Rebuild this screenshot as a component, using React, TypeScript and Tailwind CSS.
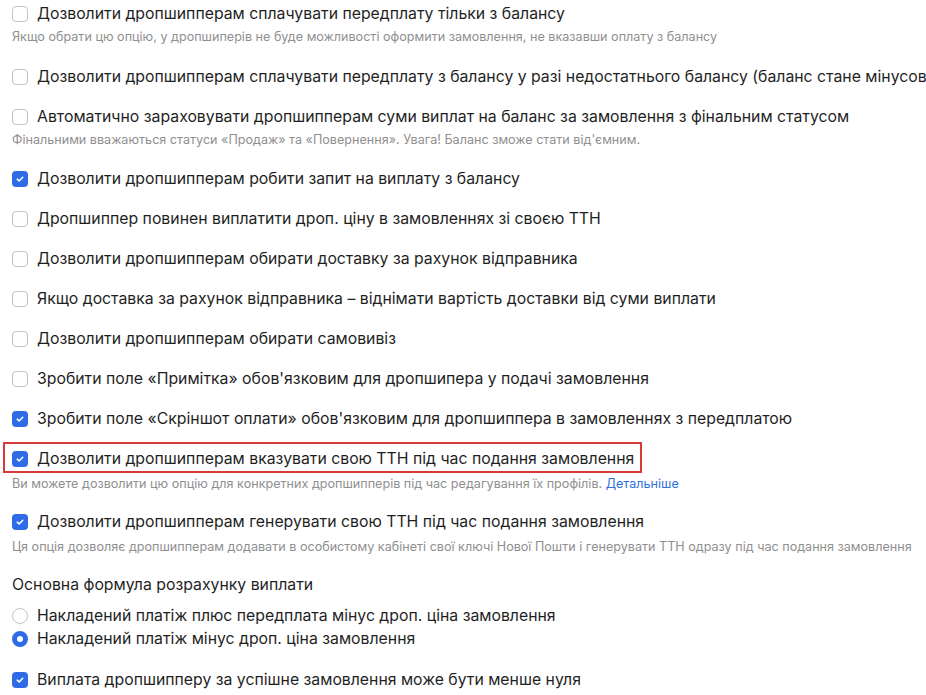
import { useState } from 'react';

type Item = {
  label: string;
  checked: boolean;
  hint?: React.ReactNode;
  highlight?: boolean;
  lower?: boolean;
};

const items: Item[] = [
  {
    label: 'Дозволити дропшипперам сплачувати передплату тільки з балансу',
    checked: false,
    hint: 'Якщо обрати цю опцію, у дропшиперів не буде можливості оформити замовлення, не вказавши оплату з балансу',
  },
  {
    label: 'Дозволити дропшипперам сплачувати передплату з балансу у разі недостатнього балансу (баланс стане мінусовим)',
    checked: false,
  },
  {
    label: 'Автоматично зараховувати дропшипперам суми виплат на баланс за замовлення з фінальним статусом',
    checked: false,
    hint: 'Фінальними вважаються статуси «Продаж» та «Повернення». Увага! Баланс зможе стати від\'ємним.',
  },
  { label: 'Дозволити дропшипперам робити запит на виплату з балансу', checked: true },
  { label: 'Дропшиппер повинен виплатити дроп. ціну в замовленнях зі своєю ТТН', checked: false },
  { label: 'Дозволити дропшипперам обирати доставку за рахунок відправника', checked: false },
  { label: 'Якщо доставка за рахунок відправника – віднімати вартість доставки від суми виплати', checked: false },
  { label: 'Дозволити дропшипперам обирати самовивіз', checked: false },
  { label: 'Зробити поле «Примітка» обов\'язковим для дропшипера у подачі замовлення', checked: false },
  {
    label: 'Зробити поле «Скріншот оплати» обов\'язковим для дропшиппера в замовленнях з передплатою',
    checked: true,
  },
  {
    label: 'Дозволити дропшипперам вказувати свою ТТН під час подання замовлення',
    checked: true,
    highlight: true,
    lower: true,
    hint: (
      <>
        Ви можете дозволити цю опцію для конкретних дропшипперів під час редагування їх профілів.{' '}
        <a href="#" className="text-[#2f6fde]">
          Детальніше
        </a>
      </>
    ),
  },
  {
    label: 'Дозволити дропшипперам генерувати свою ТТН під час подання замовлення',
    checked: true,
    lower: true,
    hint: 'Ця опція дозволяє дропшипперам додавати в особистому кабінеті свої ключі Нової Пошти і генерувати ТТН одразу під час подання замовлення',
  },
];

const Checkbox = ({ checked, onClick }: { checked: boolean; onClick: () => void }) => (
  <button
    type="button"
    onClick={onClick}
    className={
      checked
        ? 'flex h-4 w-4 shrink-0 items-center justify-center rounded-[4px] bg-[#2f6be6]'
        : 'flex h-4 w-4 shrink-0 items-center justify-center rounded-[4px] border border-[#c4c4c4] bg-white'
    }
  >
    {checked && (
      <svg width="10" height="10" viewBox="0 0 10 10" fill="none">
        <path d="M2.3 5.2 4.2 7 7.7 3.3" stroke="white" strokeWidth="1.6" strokeLinecap="round" strokeLinejoin="round" />
      </svg>
    )}
  </button>
);

const Radio = ({ checked, onClick }: { checked: boolean; onClick: () => void }) => (
  <button
    type="button"
    onClick={onClick}
    className={
      checked
        ? 'h-4 w-4 shrink-0 rounded-full border-[5px] border-[#2f6be6] bg-white'
        : 'h-4 w-4 shrink-0 rounded-full border border-[#c4c4c4] bg-white'
    }
  />
);

const App = () => {
  const [checks, setChecks] = useState(items.map((i) => i.checked));
  const [formula, setFormula] = useState(1);
  const [negative, setNegative] = useState(true);

  const toggle = (idx: number) => setChecks((c) => c.map((v, i) => (i === idx ? !v : v)));

  return (
    <div className="h-[695px] w-[926px] overflow-hidden bg-white pl-3 pt-[2px] font-['Inter','Noto_Sans',sans-serif] text-[#1f1f1f]">
      {/* Options */}
      {items.map((item, idx) => (
        <div key={idx} className={item.lower ? 'mb-[15px]' : 'mb-4'}>
          <div className="flex h-6 items-center">
            <div
              className={
                item.highlight
                  ? '-mx-[9px] -mt-[5px] flex h-[31px] items-center gap-[9px] self-start whitespace-nowrap border-2 border-[#d83a3a] pl-[7px] pr-[6px] pt-[3px]'
                  : 'flex items-center gap-[9px] whitespace-nowrap'
              }
            >
              <Checkbox checked={checks[idx]} onClick={() => toggle(idx)} />
              <span className="text-[15.8px] leading-6">{item.label}</span>
            </div>
          </div>
          {item.hint && (
            <p
              className={
                item.lower
                  ? 'whitespace-nowrap pt-[1.5px] text-[12.6px] leading-[22.5px] text-[#8f8f8f]'
                  : 'whitespace-nowrap text-[12.6px] leading-[22.5px] text-[#8f8f8f]'
              }
            >
              {item.hint}
            </p>
          )}
        </div>
      ))}

      {/* Formula */}
      <div>
        <p className="text-[15.8px] leading-6">Основна формула розрахунку виплати</p>
        <div className="mt-[7.5px] flex flex-col">
          {['Накладений платіж плюс передплата мінус дроп. ціна замовлення', 'Накладений платіж мінус дроп. ціна замовлення'].map(
            (label, i) => (
              <label key={i} className="flex h-[23px] items-center gap-[9px]">
                <Radio checked={formula === i} onClick={() => setFormula(i)} />
                <span className="text-[15.8px]">{label}</span>
              </label>
            ),
          )}
        </div>
      </div>

      <div className="mt-[17.5px] flex h-6 items-center gap-[9px]">
        <Checkbox checked={negative} onClick={() => setNegative((v) => !v)} />
        <span className="text-[15.8px]">Виплата дропшипперу за успішне замовлення може бути менше нуля</span>
      </div>
    </div>
  );
};

export default App;
